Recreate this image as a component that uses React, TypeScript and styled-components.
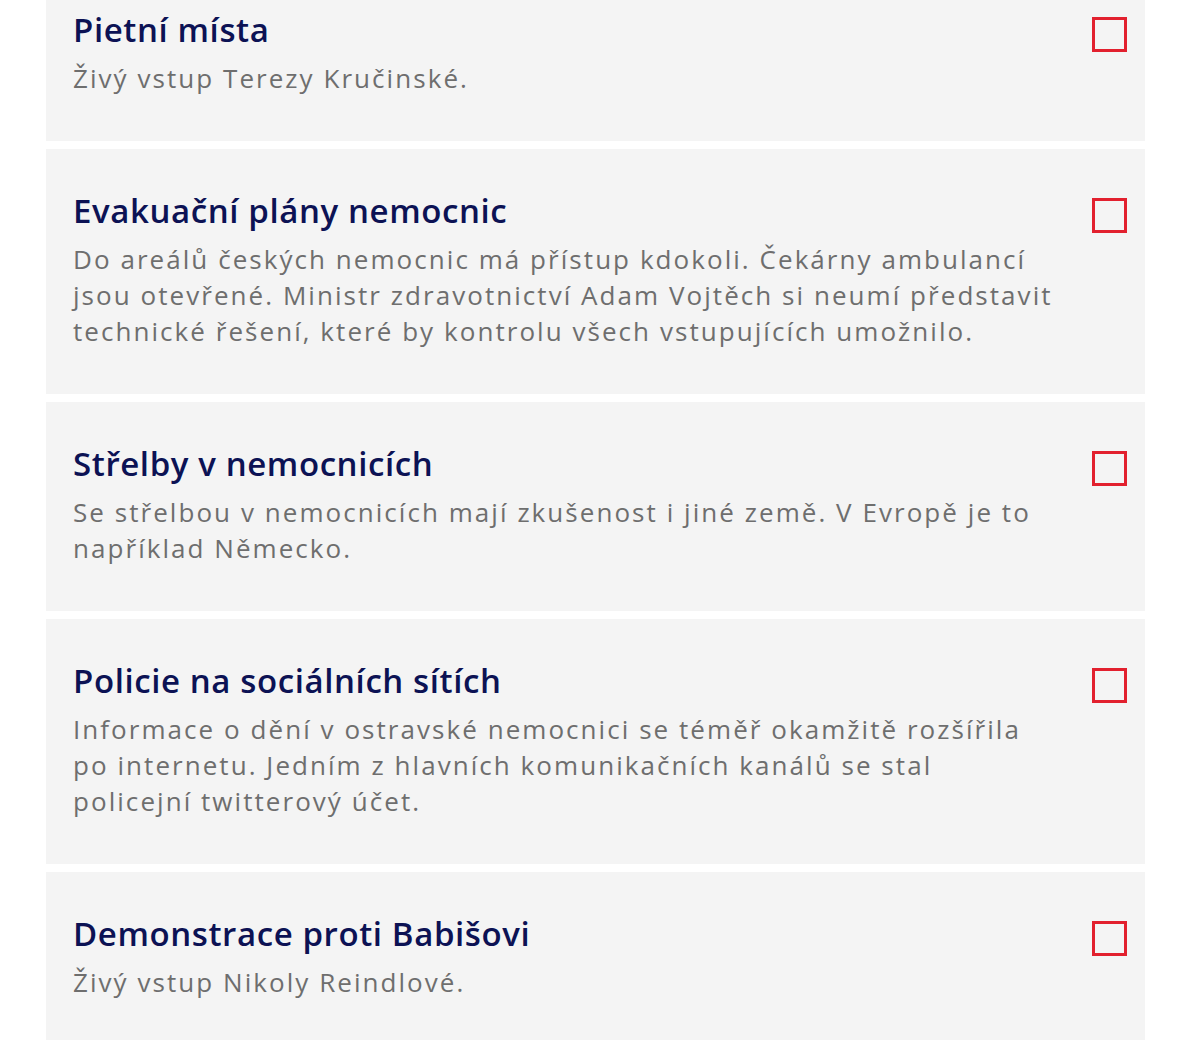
import React from 'react';
import styled, { createGlobalStyle } from 'styled-components';

const GlobalStyle = createGlobalStyle`
  html, body {
    margin: 0;
    padding: 0;
    background: #ffffff;
    font-family: "Open Sans", "Noto Sans", Arial, sans-serif;
  }
`;

const Page = styled.main`
  width: 1200px;
  height: 1040px;
  overflow: hidden;
`;

const List = styled.ul`
  list-style: none;
  margin: -32px 0 0 46px;
  padding: 0;
  width: 1099px;
  display: flex;
  flex-direction: column;
  gap: 8px;
`;

const Card = styled.li`
  display: flex;
  align-items: flex-start;
  background: #f4f4f4;
  padding: 42px 18px 45px 27px;
`;

const Body = styled.div`
  flex: 1;
  max-width: 982px;
`;

const Title = styled.h3`
  margin: 0 0 10px;
  font-size: 33px;
  line-height: 40px;
  font-weight: 600;
  letter-spacing: 0.6px;
  color: #0c1254;
`;

const Text = styled.p`
  margin: 0;
  font-size: 26px;
  line-height: 36px;
  letter-spacing: 2.05px;
  color: #6e6e6e;
`;

const Check = styled.span`
  box-sizing: border-box;
  margin: 7px 0 0 auto;
  flex: none;
  width: 35px;
  height: 35px;
  border: 3px solid #e2202e;
`;

const items = [
  { title: 'Pietní místa', text: 'Živý vstup Terezy Kručinské.' },
  {
    title: 'Evakuační plány nemocnic',
    text: 'Do areálů českých nemocnic má přístup kdokoli. Čekárny ambulancí jsou otevřené. Ministr zdravotnictví Adam Vojtěch si neumí představit technické řešení, které by kontrolu všech vstupujících umožnilo.',
  },
  {
    title: 'Střelby v nemocnicích',
    text: 'Se střelbou v nemocnicích mají zkušenost i jiné země. V Evropě je to například Německo.',
  },
  {
    title: 'Policie na sociálních sítích',
    text: 'Informace o dění v ostravské nemocnici se téměř okamžitě rozšířila po internetu. Jedním z hlavních komunikačních kanálů se stal policejní twitterový účet.',
  },
  { title: 'Demonstrace proti Babišovi', text: 'Živý vstup Nikoly Reindlové.' },
];

const App = () => (
  <Page>
    <GlobalStyle />
    <List>
      {items.map((item) => (
        <Card key={item.title}>
          <Body>
            <Title>{item.title}</Title>
            <Text>{item.text}</Text>
          </Body>
          <Check />
        </Card>
      ))}
    </List>
  </Page>
);

export default App;
